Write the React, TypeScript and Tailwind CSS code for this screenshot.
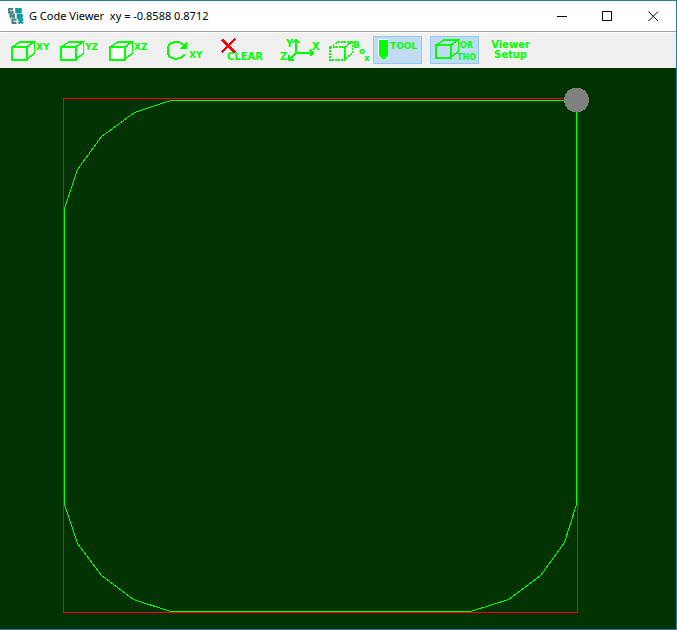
import type { ReactNode } from "react";

type Face = "top" | "side" | "front" | "none";

const LABEL = "text-[9px] leading-[10px] font-bold";

function Cube({ face, dashed = false }: { face: Face; dashed?: boolean }) {
  return (
    <svg width="25" height="21" viewBox="0 0 25 21" className="shrink-0" fill="none" stroke="#00ff00" strokeWidth="1.5" shapeRendering="crispEdges" strokeDasharray={dashed ? "2 1" : undefined} aria-hidden="true">
      <path d="M1 6 L9 1 H23 L15.500 6 Z" fill={face === "top" ? "#fff" : "none"} />
      <path d="M15.500 6 L23.500 1 V12 L16 18.500 Z" fill={face === "side" ? "#fff" : "none"} />
      <path d="M1 6 H16 V19 H1 Z" strokeWidth="2" fill={face === "front" ? "#fff" : "none"} />
    </svg>
  );
}

function ToolButton({ label, active = false, children }: { label: string; active?: boolean; children: ReactNode }) {
  return (
    <button
      type="button"
      aria-label={label}
      aria-pressed={active}
      className={`flex h-7 w-[49px] shrink-0 items-start border pt-1 pl-1 text-[#00ff00] ${active ? "border-[#90c8f6] bg-[#c0dcf3]" : "border-transparent"}`}
    >
      {children}
    </button>
  );
}

function AppLogo() {
  return (
    <svg width="16" height="16" viewBox="0 0 16 16" className="shrink-0" fill="none" aria-hidden="true">
      <path d="M0 0H5L8 15H3ZM7 0H12L15 15H10Z" fill="#b4dce1" />
      <g stroke="#4d7f88" strokeWidth="1.8">
        <path d="M5 1H1V4.500H4.500V3M2.500 5.500V10M2.500 6L6 9.500M6 5.500V10M8.500 11.500H4.500V15H8.500" />
      </g>
      <g stroke="#079a9f" strokeWidth="2.4">
        <path d="M8.500 5V0L10.500 3L12.500 0V5M10 7H13.500V9.500H10ZM10.500 11L15 15.500M15 11L10.500 15.500" />
      </g>
    </svg>
  );
}

function TitleBar() {
  return (
    <header className="flex h-[31px] items-center border-b border-[#a0a0a0] bg-white pl-2">
      <AppLogo />
      <h1 className="ml-[5px] flex-1 text-[11px] leading-4 whitespace-pre text-black">G Code Viewer  xy = -0.8588 0.8712</h1>
      <div className="flex">
        <button type="button" aria-label="Minimize" className="flex h-[30px] w-[45px] items-center justify-center">
          <svg width="11" height="11" viewBox="0 0 11 11" stroke="#000" aria-hidden="true"><path d="M0 5.500H10" /></svg>
        </button>
        <button type="button" aria-label="Maximize" className="flex h-[30px] w-[45px] items-center justify-center">
          <svg width="11" height="11" viewBox="0 0 11 11" stroke="#000" fill="none" aria-hidden="true"><path d="M.5 .5H9.500V9.500H.5Z" /></svg>
        </button>
        <button type="button" aria-label="Close" className="flex h-[30px] w-[46px] items-center justify-center">
          <svg width="11" height="11" viewBox="0 0 11 11" stroke="#000" aria-hidden="true"><path d="M.5 .5L10 10M10 .5L.5 10" /></svg>
        </button>
      </div>
    </header>
  );
}

function Toolbar() {
  return (
    <div role="toolbar" aria-label="View" className="flex h-9 gap-2 border-t border-white bg-[#f0f0f0] pt-[3px] pl-[6px] font-['DejaVu_Sans',sans-serif]">
      <div className="flex">
        <ToolButton label="View XY"><Cube face="top" /><span className={`${LABEL} pt-px`}>XY</span></ToolButton>
        <ToolButton label="View YZ"><Cube face="side" /><span className={`${LABEL} pt-px`}>YZ</span></ToolButton>
        <ToolButton label="View XZ"><Cube face="front" /><span className={`${LABEL} pt-px`}>XZ</span></ToolButton>
      </div>
      <ToolButton label="Rotate XY">
        <svg width="23" height="20" viewBox="0 0 23 20" className="shrink-0" fill="none" stroke="#00ff00" strokeWidth="2" shapeRendering="crispEdges" aria-hidden="true">
          <path d="M18.500 5C16.500 2.500 14 1 11 1H9C5 1.500 2 4 2 8V11C2 15 5 17 8 17.500H12C15 17 17 16 18.500 13" />
          <path d="M20.500 1V8H13.500Z" fill="#00ff00" stroke="none" />
        </svg>
        <span className={`${LABEL} pt-[9px]`}>XY</span>
      </ToolButton>
      <ToolButton label="Clear">
        <svg width="42" height="22" viewBox="0 0 42 22" className="shrink-0 overflow-visible" aria-hidden="true">
          <text x="4" y="19" fill="#00ff00" fontSize="10" fontWeight="bold">CLEAR</text>
          <path d="M-1 -1.500L12 11.500M12 -2L-1.500 11.500" stroke="#ff0000" strokeWidth="2.5" shapeRendering="crispEdges" />
        </svg>
      </ToolButton>
      <div className="flex">
        <ToolButton label="Axes">
          <svg width="42" height="22" viewBox="0 0 42 22" className="shrink-0 overflow-visible" fill="none" stroke="#00ff00" shapeRendering="crispEdges" aria-hidden="true">
            <path d="M16 12V-1M12.500 2L16 -1.500L19.500 2M16 12H33M30 9L33 12L30 15M16 12L9.500 18.500M9 14V19H14" strokeWidth="1.6" />
            <g fill="#00ff00" stroke="none" fontSize="10" fontWeight="bold"><text x="6" y="6">Y</text><text x="32" y="9">X</text><text x="0" y="19">Z</text></g>
          </svg>
        </ToolButton>
        <ToolButton label="Box">
          <Cube face="none" dashed />
          <svg width="18" height="22" viewBox="0 0 18 22" className="shrink-0" fill="#00ff00" fontSize="9" fontWeight="bold" aria-hidden="true"><text x="-1" y="7">B</text><text x="5" y="13">o</text><text x="10" y="20">x</text></svg>
        </ToolButton>
        <ToolButton label="Tool" active>
          <svg width="12" height="20" viewBox="0 0 12 20" className="shrink-0 overflow-visible" aria-hidden="true"><path d="M.5 14V-1.500H10" fill="none" stroke="#fff" /><path d="M.5 14L4 18.500" stroke="#fff" /><path d="M1 -1H10V14L7 18H4L1 14Z" fill="#00ff00" /></svg>
          <span className={LABEL}>TOOL</span>
        </ToolButton>
      </div>
      <ToolButton label="Orthographic" active>
        <div className="-mt-0.5 shrink-0"><Cube face="none" /></div>
        <svg width="24" height="22" viewBox="0 0 24 22" className="-ml-1 shrink-0" fill="#00ff00" fontSize="8" fontWeight="bold" aria-hidden="true"><text x="4" y="7">OR</text><text x="1" y="19">THO</text></svg>
      </ToolButton>
      <button type="button" className="h-7 w-[47px] shrink-0 text-center text-[10px] leading-[10px] font-bold text-[#00ff00]">Viewer<br />Setup</button>
    </div>
  );
}

function ToolPath() {
  return (
    <main className="flex-1 bg-[#003300]">
      <svg width="640" height="552" viewBox="0 0 640 552" className="block" fill="none" strokeWidth="1" shapeRendering="crispEdges" role="img" aria-label="Tool path">
        <path d="M63 30H578V31H63ZM63 544H578V545H63ZM63 30H64V545H63ZM577 30H578V545H577Z" fill="#ff0000" />
        <path d="M576.500 32.500H170.500L134.500 44.500L101.500 68.500L77.500 101.500L64.500 140.500V436.500L77.500 475.500L101.500 507.500L133.500 531.500L170.500 543.500H470.500L508.500 531.500L540.500 507.500L564.500 474.500L576.500 436.500Z" stroke="#00ff00" />
        <circle cx="576.5" cy="32" r="12.5" fill="#808080" />
      </svg>
    </main>
  );
}

export default function App() {
  return (
    <div className="flex min-h-screen flex-col border-t border-r border-b border-[#2b7a99] font-['Noto_Sans',sans-serif]">
      <TitleBar />
      <Toolbar />
      <ToolPath />
    </div>
  );
}
